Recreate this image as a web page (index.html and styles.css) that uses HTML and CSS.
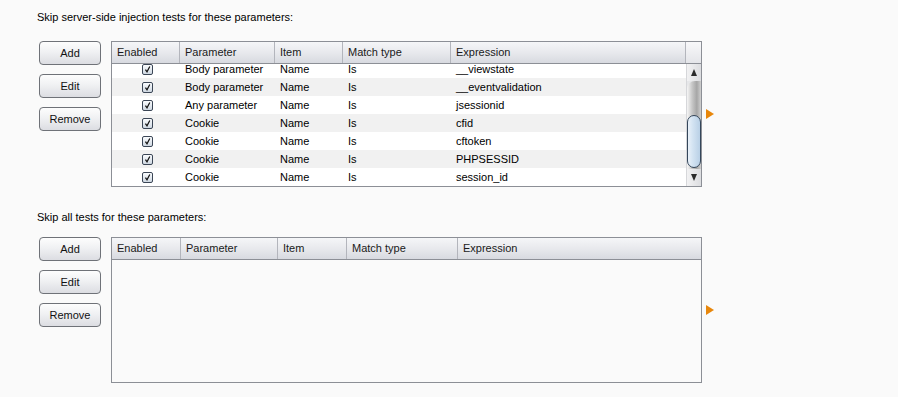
FILE: index.html
```html
<!doctype html>
<html>
 <head>
  <meta charset="UTF-8">
  <title>Parameter exclusions</title>
  <link rel="stylesheet" href="styles.css">
 </head>
 <body>
  <div class="page">
   <!-- server-side injection exclusions -->
   <p class="title first">Skip server-side injection tests for these parameters:</p>
   <div class="panel">
    <div class="buttons">
     <button class="btn">Add</button>
     <button class="btn">Edit</button>
     <button class="btn">Remove</button>
    </div>
    <div class="table t1">
     <div class="thead">
      <span>Enabled</span><span>Parameter</span><span>Item</span><span>Match type</span><span>Expression</span><span class="corner"></span>
     </div>
     <div class="tbody">
      <div class="rows">
       <div class="row"><span class="cb"><svg viewBox="0 0 11 11"><path d="M3 5.6 L4.9 8.4 L8.3 1.8"/></svg></span><span>Body parameter</span><span>Name</span><span>Is</span><span>__viewstate</span></div>
       <div class="row"><span class="cb"><svg viewBox="0 0 11 11"><path d="M3 5.6 L4.9 8.4 L8.3 1.8"/></svg></span><span>Body parameter</span><span>Name</span><span>Is</span><span>__eventvalidation</span></div>
       <div class="row"><span class="cb"><svg viewBox="0 0 11 11"><path d="M3 5.6 L4.9 8.4 L8.3 1.8"/></svg></span><span>Any parameter</span><span>Name</span><span>Is</span><span>jsessionid</span></div>
       <div class="row"><span class="cb"><svg viewBox="0 0 11 11"><path d="M3 5.6 L4.9 8.4 L8.3 1.8"/></svg></span><span>Cookie</span><span>Name</span><span>Is</span><span>cfid</span></div>
       <div class="row"><span class="cb"><svg viewBox="0 0 11 11"><path d="M3 5.6 L4.9 8.4 L8.3 1.8"/></svg></span><span>Cookie</span><span>Name</span><span>Is</span><span>cftoken</span></div>
       <div class="row"><span class="cb"><svg viewBox="0 0 11 11"><path d="M3 5.6 L4.9 8.4 L8.3 1.8"/></svg></span><span>Cookie</span><span>Name</span><span>Is</span><span>PHPSESSID</span></div>
       <div class="row"><span class="cb"><svg viewBox="0 0 11 11"><path d="M3 5.6 L4.9 8.4 L8.3 1.8"/></svg></span><span>Cookie</span><span>Name</span><span>Is</span><span>session_id</span></div>
      </div>
      <div class="scrollbar">
       <div class="sb-btn"><b class="up"></b></div>
       <div class="sb-track"><div class="sb-thumb"></div></div>
       <div class="sb-btn"><b class="down"></b></div>
      </div>
     </div>
    </div>
    <span class="arrow"></span>
   </div>

   <!-- all-test exclusions -->
   <p class="title second">Skip all tests for these parameters:</p>
   <div class="panel">
    <div class="buttons">
     <button class="btn">Add</button>
     <button class="btn">Edit</button>
     <button class="btn">Remove</button>
    </div>
    <div class="table t2">
     <div class="thead">
      <span>Enabled</span><span>Parameter</span><span>Item</span><span>Match type</span><span>Expression</span>
     </div>
     <div class="tbody empty"></div>
    </div>
    <span class="arrow"></span>
   </div>
  </div>
 </body>
</html>
```

FILE: styles.css
```css
*{
	margin:0;
	padding:0;
	box-sizing:border-box;
}
body{
	background:#fafafa;
	font-family:"Liberation Sans",Arial,sans-serif;
	font-size:11px;
	color:#000;
}
.page{
	padding-top:10px;
}
.title{
	height:14px;
	line-height:14px;
	padding-left:37px;
}
.title.first{
	margin-bottom:17px;
}
.title.second{
	margin-top:23px;
	margin-bottom:13px;
}
.panel{
	display:flex;
	align-items:flex-start;
	padding-left:39px;
}
.buttons{
	display:flex;
	flex-direction:column;
	gap:9px;
	width:62px;
	margin-right:10px;
}
.btn{
	height:24px;
	border:1px solid #6f7278;
	border-radius:4px;
	background:linear-gradient(#fdfdfd,#f0f1f3 45%,#dcdde2);
	font-family:inherit;
	font-size:11px;
	color:#111;
}

/* tables */
.table{
	width:591px;
	border:1px solid #8c8f96;
	background:#fafafa;
}
.thead{
	display:grid;
	height:22px;
	border-bottom:1px solid #8c8f96;
	background:linear-gradient(#f5f6f8,#e8e9ed 50%,#d8dae0);
}
.thead>span{
	line-height:21px;
	padding-left:5px;
	border-right:1px solid #b3b5bc;
	color:#1a1a1a;
}
.thead>span:last-child{
	border-right:none;
}
.t1 .thead{
	grid-template-columns:68px 95px 68px 108px 235px 15px;
}
.t1 .thead>span.corner{
	background:linear-gradient(#f8f8fa,#e4e5e9);
}
.t2 .thead{
	grid-template-columns:69px 97px 69px 111px 243px;
}
.tbody{
	display:flex;
	height:122px;
	overflow:hidden;
}
.rows{
	width:574px;
	margin-top:-4px;
}
.row{
	display:grid;
	grid-template-columns:68px 95px 68px 108px 235px;
	height:18px;
	line-height:18px;
	background:#fff;
}
.row:nth-child(even){
	background:#f1f1f1;
}
.row>span{
	padding-left:5px;
	white-space:nowrap;
}
.row>span.cb{
	display:flex;
	align-items:center;
	justify-content:center;
	padding-left:2px;
}
.cb>svg{
	width:11px;
	height:11px;
	border:1px solid #3b4656;
	border-radius:2px;
	background:linear-gradient(#fafcfe,#cfd8e2);
}
.cb path{
	fill:none;
	stroke:#111;
	stroke-width:1.5;
}

/* scrollbar */
.scrollbar{
	display:flex;
	flex-direction:column;
	width:15px;
	border-left:1px solid #d6d7da;
	background:#e6e7e9;
}
.sb-btn{
	display:flex;
	align-items:center;
	justify-content:center;
	height:17px;
	background:linear-gradient(to right,#f2f2f3,#dcdde0);
}
.sb-btn>b{
	width:0;
	height:0;
	border-left:3px solid transparent;
	border-right:3px solid transparent;
}
.sb-btn>b.up{
	border-bottom:7px solid #2b2b2b;
}
.sb-btn>b.down{
	border-top:7px solid #2b2b2b;
}
.sb-track{
	display:flex;
	flex-direction:column;
	justify-content:flex-end;
	flex:1;
	padding-bottom:1px;
	border-radius:8px 0 0 0;
	background:linear-gradient(to right,#f6f6f6,#c9c9c9 35%,#a6a6a6 70%,#cfcfcf);
}
.sb-thumb{
	height:53px;
	border:1px solid #34465a;
	border-radius:7px;
	background:linear-gradient(to right,#e9f1f9,#d3e3f2 40%,#b9d0e6);
}

.arrow{
	align-self:center;
	margin-left:4px;
	width:0;
	height:0;
	border-top:5px solid transparent;
	border-bottom:5px solid transparent;
	border-left:8px solid #e8870b;
}
```
